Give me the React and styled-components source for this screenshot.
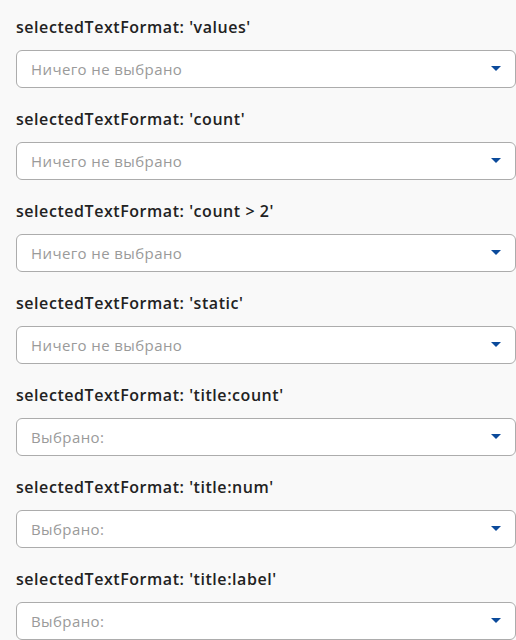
import styled, { createGlobalStyle } from "styled-components"

const GlobalStyle = createGlobalStyle`
  body {
    margin: 0;
    background: #f9f9f9;
    font-family: "Open Sans", "Noto Sans", sans-serif;
  }
`

const formats = [
  { format: "values", placeholder: "Ничего не выбрано" },
  { format: "count", placeholder: "Ничего не выбрано" },
  { format: "count > 2", placeholder: "Ничего не выбрано" },
  { format: "static", placeholder: "Ничего не выбрано" },
  { format: "title:count", placeholder: "Выбрано:" },
  { format: "title:num", placeholder: "Выбрано:" },
  { format: "title:label", placeholder: "Выбрано:" },
]

function App() {
  return (
    <>
      <GlobalStyle />
      <Page>
        {formats.map((item) => (
          <Block key={item.format}>
            <Title>selectedTextFormat: '{item.format}'</Title>
            <Select>
              <Placeholder>{item.placeholder}</Placeholder>
              <Caret />
            </Select>
          </Block>
        ))}
      </Page>
    </>
  )
}

const Page = styled.div`
  display: flex;
  flex-direction: column;
  gap: 20px;
  padding: 16px 0 0 16px;
`

const Block = styled.div`
  display: flex;
  flex-direction: column;
  gap: 12px;
`

const Title = styled.div`
  font-size: 16px;
  line-height: 22px;
  font-weight: 600;
  color: #222;
  letter-spacing: 0.55px;
`

const Select = styled.div`
  box-sizing: border-box;
  height: 38px;
  width: 500px;
  display: flex;
  align-items: center;
  justify-content: space-between;
  padding: 0 14px 1px 14px;
  background: #fff;
  border: 1px solid #acacac;
  border-radius: 6px;
`

const Placeholder = styled.span`
  font-size: 15px;
  color: #9a9a9a;
  letter-spacing: 0.4px;
`

const Caret = styled.span`
  width: 0;
  height: 0;
  border-left: 5px solid transparent;
  border-right: 5px solid transparent;
  border-top: 5px solid #0b4a9b;
`

export default App
